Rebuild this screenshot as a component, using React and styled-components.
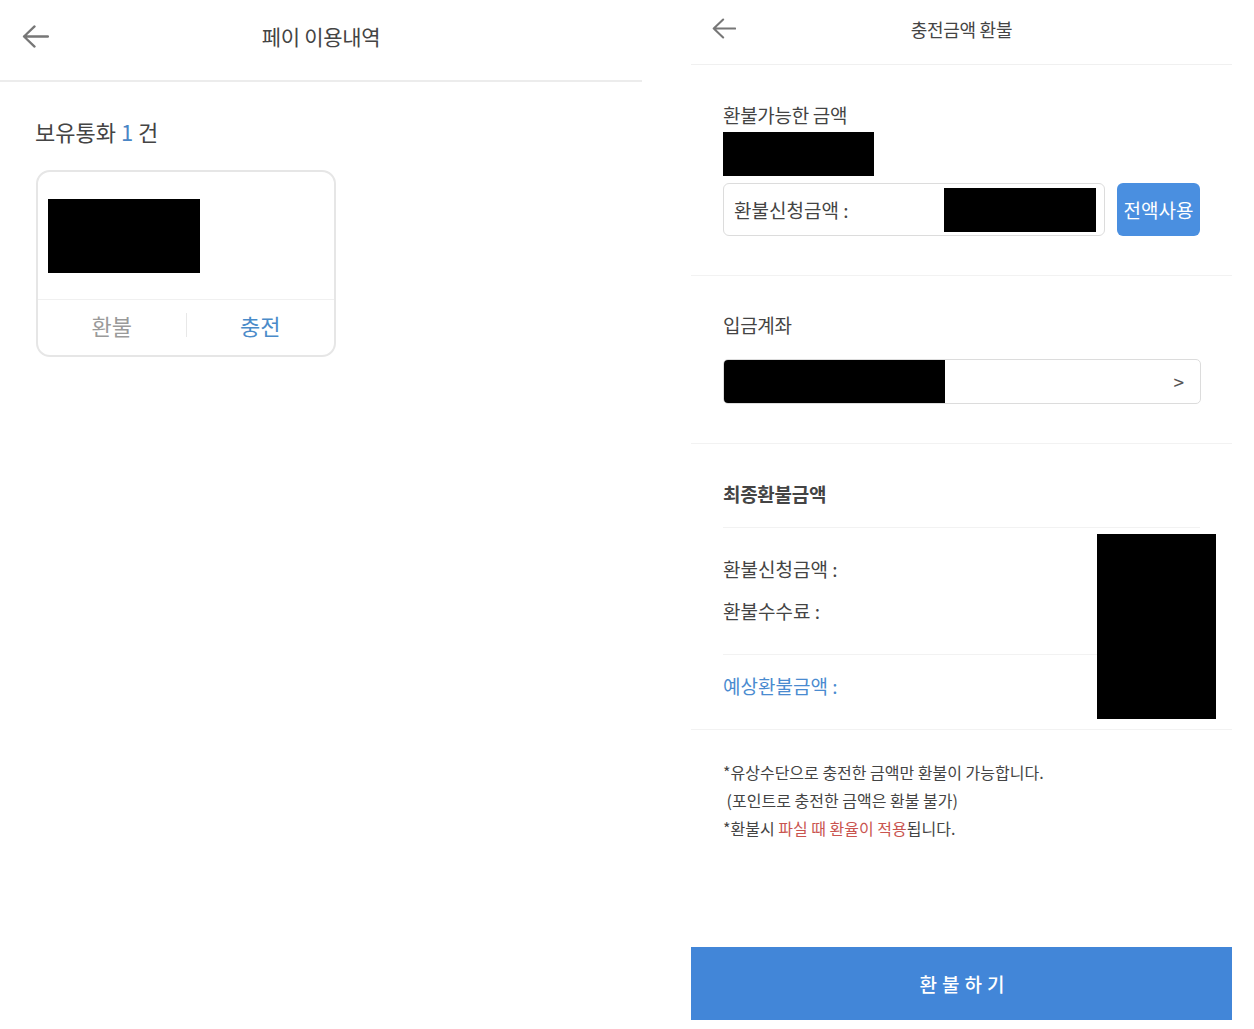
import React from "react";
import styled, { createGlobalStyle } from "styled-components";

const Global = createGlobalStyle`
  body {
    margin: 0;
    background: #fff;
    font-family: "Noto Sans CJK KR", "Noto Sans", sans-serif;
    color: #333;
  }
`;

const Page = styled.div`
  display: flex;
  width: 1254px;
  height: 1029px;
  overflow: hidden;
`;

const LeftScreen = styled.div`
  width: 642px;
  flex-shrink: 0;
`;

const RightScreen = styled.div`
  width: 541px;
  margin-left: 49px;
  display: flex;
  flex-direction: column;
  height: 1020px;
`;

const Header = styled.div`
  position: relative;
  display: flex;
  align-items: center;
  justify-content: center;
  height: ${(p) => p.$h}px;
  border-bottom: ${(p) => p.$line};
`;

const Back = styled.div`
  position: absolute;
  left: ${(p) => p.$left}px;
  top: ${(p) => p.$top}px;
  display: flex;
`;

const Title = styled.div`
  font-size: ${(p) => p.$size}px;
  color: #444;
  letter-spacing: -0.3px;
  margin-top: ${(p) => p.$mt || 0}px;
`;

const Arrow = ({ w, h }) => (
  <svg width={w} height={h} viewBox="0 0 28 24" fill="none">
    <path d="M27 12H2M13 1.5L2 12l11 10.5" stroke="#777" strokeWidth="2.4" strokeLinecap="round" strokeLinejoin="round" />
  </svg>
);

const Holding = styled.div`
  padding: 33px 35px 23px;
  font-size: 22px;
  color: #444;
  span {
    color: #4a86c5;
  }
`;

const Card = styled.div`
  margin-left: 36px;
  width: 296px;
  height: 183px;
  border: 2px solid #e6e6e6;
  border-radius: 14px;
  display: flex;
  flex-direction: column;
`;

const CardTop = styled.div`
  flex: 1;
  padding: 27px 0 0 10px;
  border-bottom: 1px solid #f0f0f0;
`;

const Redact = styled.div`
  background: #000;
  width: ${(p) => p.$w}px;
  height: ${(p) => p.$h}px;
  flex-shrink: 0;
  margin-top: ${(p) => p.$mt || 0}px;
`;

const CardActions = styled.div`
  height: 55px;
  display: flex;
  align-items: center;
`;

const CardAction = styled.div`
  flex: 1;
  text-align: center;
  font-size: 22px;
  color: ${(p) => (p.$blue ? "#4a8bc9" : "#9a9a9a")};
  margin-top: -6px;
`;

const VSep = styled.div`
  width: 1px;
  height: 24px;
  background: #e8e8e8;
  margin-top: -6px;
`;

const Section = styled.div`
  padding: ${(p) => p.$pad};
  border-bottom: 1px solid #f2f2f2;
  position: relative;
`;

const Label = styled.div`
  font-size: 19px;
  line-height: 26px;
  color: #444;
  font-weight: ${(p) => (p.$bold ? 700 : 400)};
  letter-spacing: -0.3px;
`;

const InputRow = styled.div`
  display: flex;
  align-items: center;
  gap: 12px;
  margin-top: 7px;
`;

const InputBox = styled.div`
  width: 382px;
  height: 53px;
  border: 1px solid #dcdcdc;
  border-radius: 6px;
  display: flex;
  align-items: center;
  justify-content: space-between;
  padding: 0 8px 0 10px;
  box-sizing: border-box;
`;

const InputLabel = styled.div`
  font-size: 19px;
  color: #444;
`;

const BlueButton = styled.button`
  width: 83px;
  height: 53px;
  border: none;
  border-radius: 6px;
  background: #4a8fe0;
  color: #fff;
  font-family: inherit;
  font-size: 19px;
  padding: 0;
`;

const AccountBox = styled.div`
  margin-top: 21px;
  width: 478px;
  height: 45px;
  border: 1px solid #dcdcdc;
  border-radius: 5px;
  display: flex;
  align-items: center;
  justify-content: space-between;
  box-sizing: border-box;
  overflow: hidden;
  font-size: 19px;
  color: #555;
  padding-right: 16px;
`;

const SubDivider = styled.div`
  height: 1px;
  background: #f2f2f2;
  width: 477px;
  margin: ${(p) => p.$m};
`;

const Row = styled.div`
  font-size: 19px;
  line-height: 26px;
  color: ${(p) => (p.$blue ? "#4a8bd0" : "#444")};
  margin-top: ${(p) => p.$mt}px;
`;

const Overlay = styled.div`
  position: absolute;
  left: 406px;
  top: 90px;
  width: 119px;
  height: 185px;
  background: #000;
`;

const Notes = styled.div`
  padding: 28px 32px 0;
  font-size: 16px;
  color: #444;
  line-height: 28px;
  flex: 1;
  em {
    font-style: normal;
    color: #c9544f;
  }
`;

const Submit = styled.button`
  height: 73px;
  border: none;
  background: #4286d8;
  color: #fff;
  font-family: inherit;
  font-size: 19px;
  font-weight: 500;
  letter-spacing: 5px;
  padding: 0 0 0 6px;
`;

export default function App() {
  return (
    <Page>
      <Global />
      <LeftScreen>
        <Header $h={80} $line="2px solid #ececec">
          <Back $left={22} $top={25}>
            <Arrow w={27} h={23} />
          </Back>
          <Title $size={21} $mt={-8}>페이 이용내역</Title>
        </Header>
        <Holding>
          보유통화 <span>1</span> 건
        </Holding>
        <Card>
          <CardTop>
            <Redact $w={152} $h={74} />
          </CardTop>
          <CardActions>
            <CardAction>환불</CardAction>
            <VSep />
            <CardAction $blue>충전</CardAction>
          </CardActions>
        </Card>
      </LeftScreen>

      <RightScreen>
        <Header $h={64} $line="1px solid #f0f0f0">
          <Back $left={21} $top={18}>
            <Arrow w={24} h={21} />
          </Back>
          <Title $size={18} $mt={-7}>충전금액 환불</Title>
        </Header>

        <Section $pad="37px 31px 39px 32px">
          <Label>환불가능한 금액</Label>
          <Redact $w={151} $h={44} $mt={4} />
          <InputRow>
            <InputBox>
              <InputLabel>환불신청금액 :</InputLabel>
              <Redact $w={152} $h={44} />
            </InputBox>
            <BlueButton>전액사용</BlueButton>
          </InputRow>
        </Section>

        <Section $pad="36px 31px 39px 32px">
          <Label>입금계좌</Label>
          <AccountBox>
            <Redact $w={221} $h={45} />
            <span>&gt;</span>
          </AccountBox>
        </Section>

        <Section $pad="37px 31px 30px 32px">
          <Label $bold>최종환불금액</Label>
          <SubDivider $m="20px 0 0" />
          <Row $mt={28}>환불신청금액 :</Row>
          <Row $mt={16}>환불수수료 :</Row>
          <SubDivider $m="30px 0 0" />
          <Row $blue $mt={18}>예상환불금액 :</Row>
          <Overlay />
        </Section>

        <Notes>
          <div>*유상수단으로 충전한 금액만 환불이 가능합니다.</div>
          <div>&nbsp;(포인트로 충전한 금액은 환불 불가)</div>
          <div>*환불시 <em>파실 때 환율이 적용</em>됩니다.</div>
        </Notes>

        <Submit>환불하기</Submit>
      </RightScreen>
    </Page>
  );
}
